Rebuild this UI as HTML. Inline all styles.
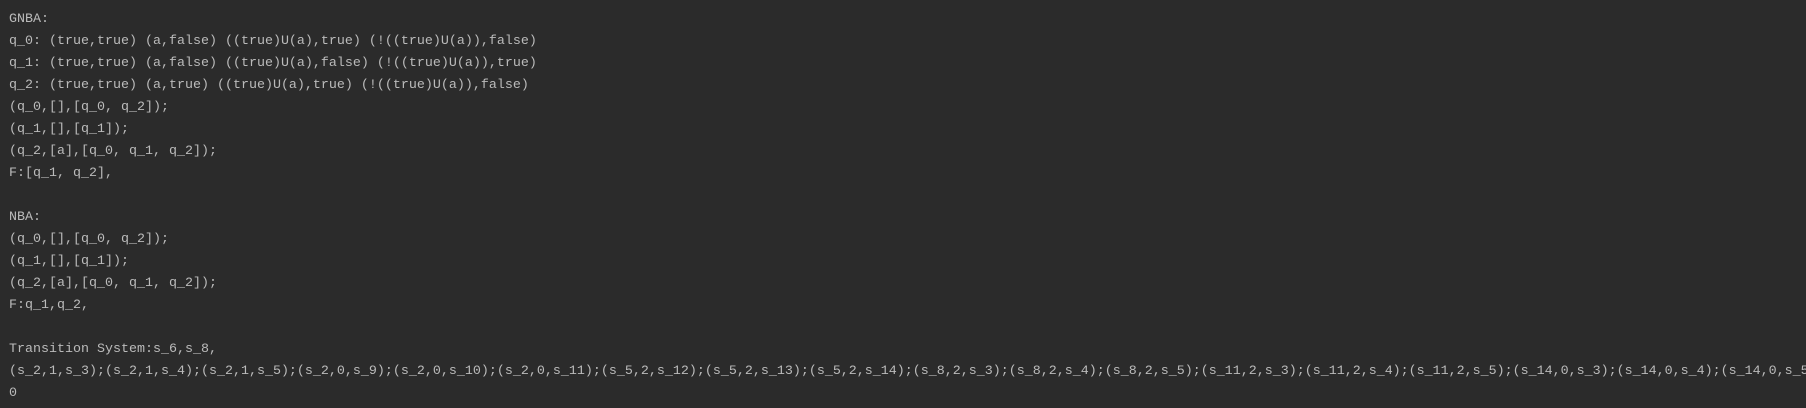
<!DOCTYPE html>
<html><head><meta charset="utf-8"><style>
html,body{margin:0;padding:0;background:#2b2b2b;width:1806px;height:408px;overflow:hidden}
pre{margin:0;padding:9px 0 0 9px;font-family:"Liberation Mono",monospace;font-size:13.33px;line-height:22px;color:#bbbbbb;white-space:pre}
</style></head><body><pre>GNBA:
q_0: (true,true) (a,false) ((true)U(a),true) (!((true)U(a)),false)
q_1: (true,true) (a,false) ((true)U(a),false) (!((true)U(a)),true)
q_2: (true,true) (a,true) ((true)U(a),true) (!((true)U(a)),false)
(q_0,[],[q_0, q_2]);
(q_1,[],[q_1]);
(q_2,[a],[q_0, q_1, q_2]);
F:[q_1, q_2],

NBA:
(q_0,[],[q_0, q_2]);
(q_1,[],[q_1]);
(q_2,[a],[q_0, q_1, q_2]);
F:q_1,q_2,

Transition System:s_6,s_8,
(s_2,1,s_3);(s_2,1,s_4);(s_2,1,s_5);(s_2,0,s_9);(s_2,0,s_10);(s_2,0,s_11);(s_5,2,s_12);(s_5,2,s_13);(s_5,2,s_14);(s_8,2,s_3);(s_8,2,s_4);(s_8,2,s_5);(s_11,2,s_3);(s_11,2,s_4);(s_11,2,s_5);(s_14,0,s_3);(s_14,0,s_4);(s_14,0,s_5);
0</pre></body></html>
